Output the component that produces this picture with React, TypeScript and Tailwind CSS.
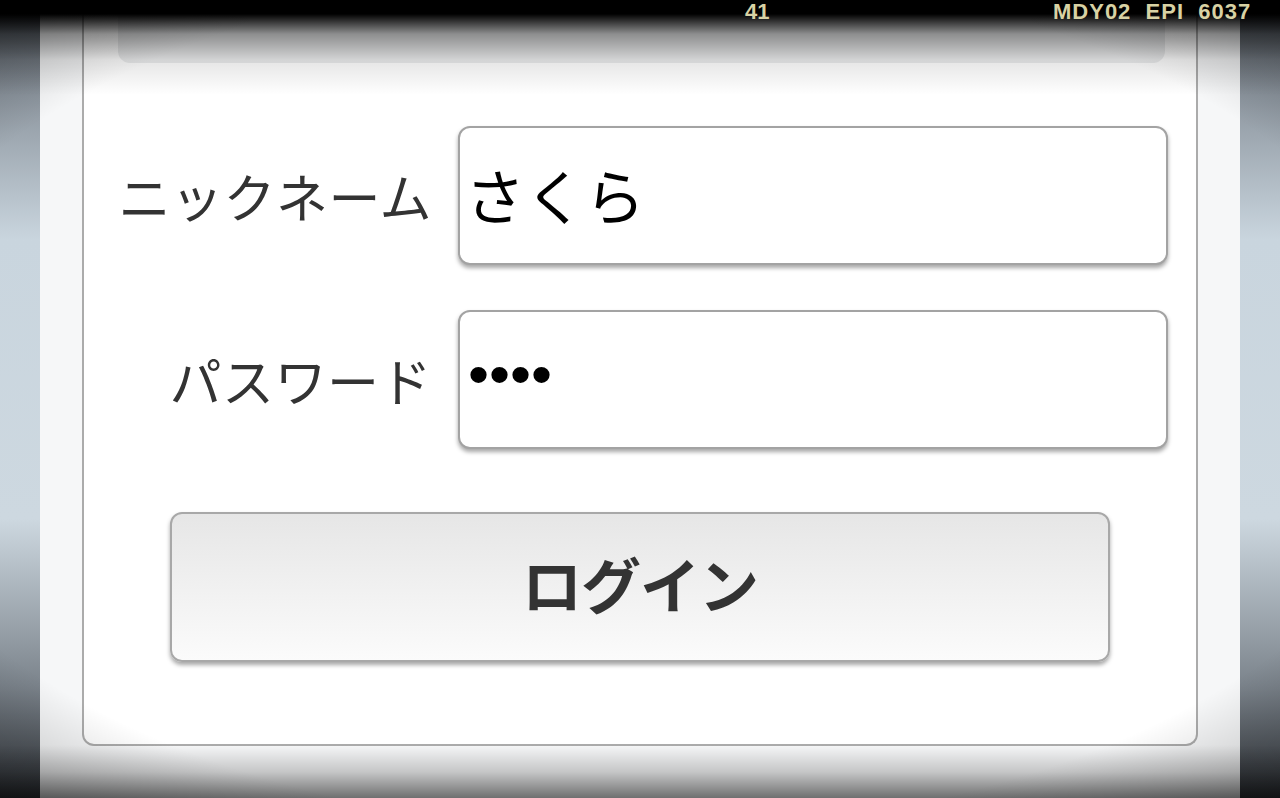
import React from 'react';

const jp = { fontFamily: '"Noto Sans CJK JP", "Noto Sans", sans-serif' };

const Field: React.FC<{ label: string; value: string; secret?: boolean }> = ({ label, value, secret }) => (
  <>
    <div className="flex items-center justify-end text-[52px] leading-none text-[#333333] tracking-[0.5px]" style={jp}>
      {label}
    </div>
    <div className="h-[139px] rounded-[12px] border-2 border-[#a3a3a3] bg-white shadow-[0_3px_4px_rgba(0,0,0,0.35)] flex items-center pl-[8px]">
      {secret ? (
        <span className="text-[60px] leading-none text-black -mt-[10px]" style={{ fontFamily: '"Liberation Sans", Arial, sans-serif' }}>
          {value}
        </span>
      ) : (
        <span className="text-[60px] leading-none text-black -mt-[4px] -ml-[3px]" style={jp}>
          {value}
        </span>
      )}
    </div>
  </>
);

const overlayFont = { fontFamily: '"Liberation Sans Narrow", "Liberation Sans", sans-serif' };

export default function App() {
  return (
    <div className="relative w-[1280px] h-[798px] overflow-hidden flex bg-white">
      {/* side strips */}
      <div className="w-[40px] h-full bg-[linear-gradient(to_bottom,#4a4f56_0%,#8d969f_12%,#c9d5de_30%,#cdd8e0_65%,#7b838b_86%,#33373c_100%)]" />
      <div className="flex-1 h-full bg-[#f6f7f8] px-[42px] pb-[52px] flex">
        <div className="flex-1 rounded-b-[12px] border-2 border-t-0 border-[#ababab] bg-white flex flex-col">
          <div className="ml-[34px] mr-[31px] h-[63px] rounded-b-[12px] bg-[#ebeced]" />
          <div className="mt-[63px] grid grid-cols-[348px_710px] gap-x-[26px] gap-y-[45px]">
            <Field label="ニックネーム" value="さくら" />
            <Field label="パスワード" value="••••" secret />
          </div>
          <button
            className="mt-[63px] ml-[86px] w-[940px] h-[150px] rounded-[12px] border-2 border-[#a8a8a8] bg-[linear-gradient(to_bottom,#e6e6e6,#fbfbfb)] shadow-[0_3px_4px_rgba(0,0,0,0.35)] flex items-center justify-center"
          >
            <span className="text-[60px] font-bold leading-none text-[#333333] -mt-[8px] tracking-[-1px]" style={jp}>
              ログイン
            </span>
          </button>
        </div>
      </div>
      <div className="w-[40px] h-full bg-[linear-gradient(to_bottom,#4a4f56_0%,#8d969f_12%,#c9d5de_30%,#cdd8e0_65%,#7b838b_86%,#33373c_100%)]" />

      {/* screen vignette */}
      <div className="pointer-events-none absolute inset-0 bg-[linear-gradient(to_bottom,#000_0px,#000_14px,rgba(0,0,0,0.4)_34px,rgba(0,0,0,0.1)_60px,transparent_95px,transparent_745px,rgba(0,0,0,0.2)_772px,rgba(0,0,0,0.55)_798px)]" />
      <div className="pointer-events-none absolute inset-0 bg-[radial-gradient(ellipse_85%_75%_at_50%_50%,transparent_72%,rgba(0,0,0,0.4)_100%)]" />

      {/* overlay text */}
      <div className="absolute top-[-5px] left-[745px] text-[22px] font-bold text-[#d8d2a4]" style={overlayFont}>
        41
      </div>
      <div className="absolute top-[-5px] left-[1053px] text-[22px] font-bold text-[#d8d2a4] whitespace-pre tracking-[1px]" style={overlayFont}>
        MDY02  EPI  6037
      </div>
    </div>
  );
}
